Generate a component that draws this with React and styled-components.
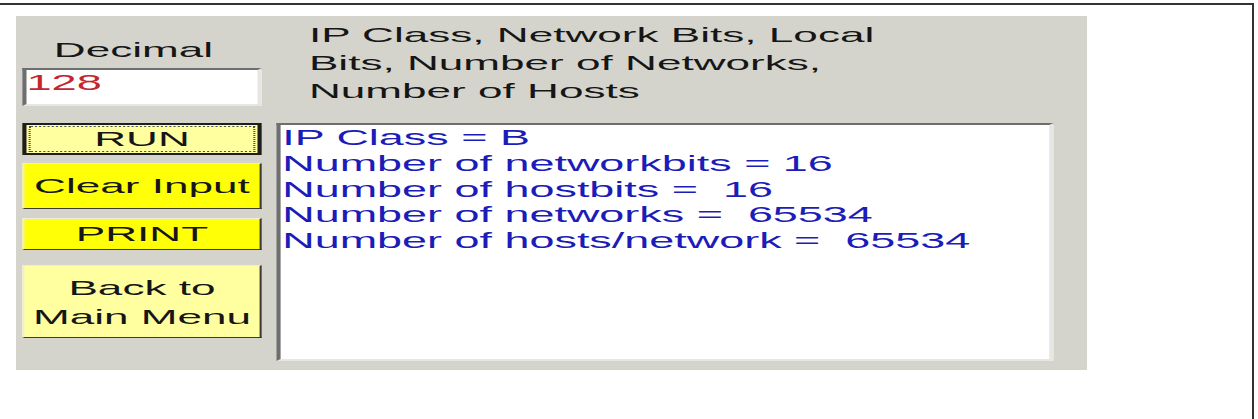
import React from 'react';
import styled, { createGlobalStyle } from 'styled-components';

const GlobalStyle = createGlobalStyle`
  html, body {
    margin: 0;
    padding: 0;
    background: #ffffff;
    overflow: hidden;
  }
`;

const results = [
  'IP Class = B',
  'Number of networkbits = 16',
  'Number of hostbits =  16',
  'Number of networks =  65534',
  'Number of hosts/network =  65534',
];

const App = () => {
  return (
    <>
      <GlobalStyle />
      <Frame>
        <Panel>
          <InputCell>
            <FieldLabel>Decimal</FieldLabel>
            <Field defaultValue="128" />
          </InputCell>
          <HeaderCell>
            <Heading>
              IP Class, Network Bits, Local
              <br />
              Bits, Number of Networks,
              <br />
              Number of Hosts
            </Heading>
          </HeaderCell>
          <ButtonStack>
            <Button $focused $pale $height={32}>RUN</Button>
            <Button $height={46}>Clear Input</Button>
            <Button $height={32}>PRINT</Button>
            <Button $pale $height={73} $two>
              Back to
              <br />
              Main Menu
            </Button>
          </ButtonStack>
          <Output>
            {results.map(line => (
              <OutputLine key={line}>{line}</OutputLine>
            ))}
          </Output>
        </Panel>
      </Frame>
    </>
  );
};

export default App;

const Frame = styled.div`
  box-sizing: border-box;
  width: 1254px;
  min-height: 416px;
  margin-top: 3px;
  padding: 11px 0 0 16px;
  border-top: 2px solid #333333;
  border-right: 2px solid #333333;
`;

const Panel = styled.div`
  box-sizing: border-box;
  width: 510px;
  padding: 0 15.7px 9px 3px;
  background: #d4d4cc;
  transform: scaleX(2.1);
  transform-origin: left top;
  display: grid;
  grid-template-columns: 114px 370.5px;
  grid-template-rows: 107px auto;
  column-gap: 6.8px;
  font-family: "Liberation Sans", Arial, sans-serif;
  font-size: 21px;
  color: #161616;
`;

const InputCell = styled.div`
  display: flex;
  flex-direction: column;
  padding-top: 22px;
`;

const FieldLabel = styled.div`
  line-height: 24px;
  padding-left: 15px;
  margin-bottom: 6px;
`;

const Field = styled.input`
  box-sizing: border-box;
  width: 100%;
  height: 38px;
  margin: 0;
  padding: 0 0 8px 0;
  border-style: solid;
  border-width: 2px;
  border-color: #6e6e6e #e6e6e2 #e6e6e2 #6e6e6e;
  background: #ffffff;
  color: #c4262e;
  font-family: inherit;
  font-size: 21.5px;
  outline: none;
`;

const HeaderCell = styled.div`
  padding: 5px 0 0 15.7px;
`;

const Heading = styled.div`
  line-height: 28px;
  white-space: nowrap;
`;

const ButtonStack = styled.div`
  display: flex;
  flex-direction: column;
  gap: 8px;
  & > :nth-child(3) {
    margin-top: 1px;
  }
  & > :nth-child(4) {
    margin-top: 7px;
  }
`;

const Button = styled.button`
  box-sizing: border-box;
  width: 100%;
  height: ${props => props.$height}px;
  margin: 0;
  padding: 0;
  font-family: inherit;
  font-size: 21px;
  line-height: ${props => (props.$two ? '29px' : '24px')};
  color: #161616;
  background: ${props => (props.$pale ? '#ffffa0' : '#ffff06')};
  border-style: solid;
  border-width: ${props => (props.$focused ? '2px' : '1px')};
  border-color: ${props =>
    props.$focused ? '#1e1e1e' : '#eeeed8 #3c3c34 #3c3c34 #eeeed8'};
  outline: ${props => (props.$focused ? '1px dotted #505050' : 'none')};
  outline-offset: -4px;
  white-space: nowrap;
  cursor: pointer;
`;

const Output = styled.div`
  box-sizing: border-box;
  height: 238px;
  padding: 1px 0 0 1px;
  background: #ffffff;
  border-style: solid;
  border-width: 2px;
  border-color: #6e6e6e #e6e6e2 #e6e6e2 #6e6e6e;
  color: #1c1cb8;
  font-size: 21.4px;
`;

const OutputLine = styled.div`
  line-height: 25.8px;
  white-space: pre;
`;
